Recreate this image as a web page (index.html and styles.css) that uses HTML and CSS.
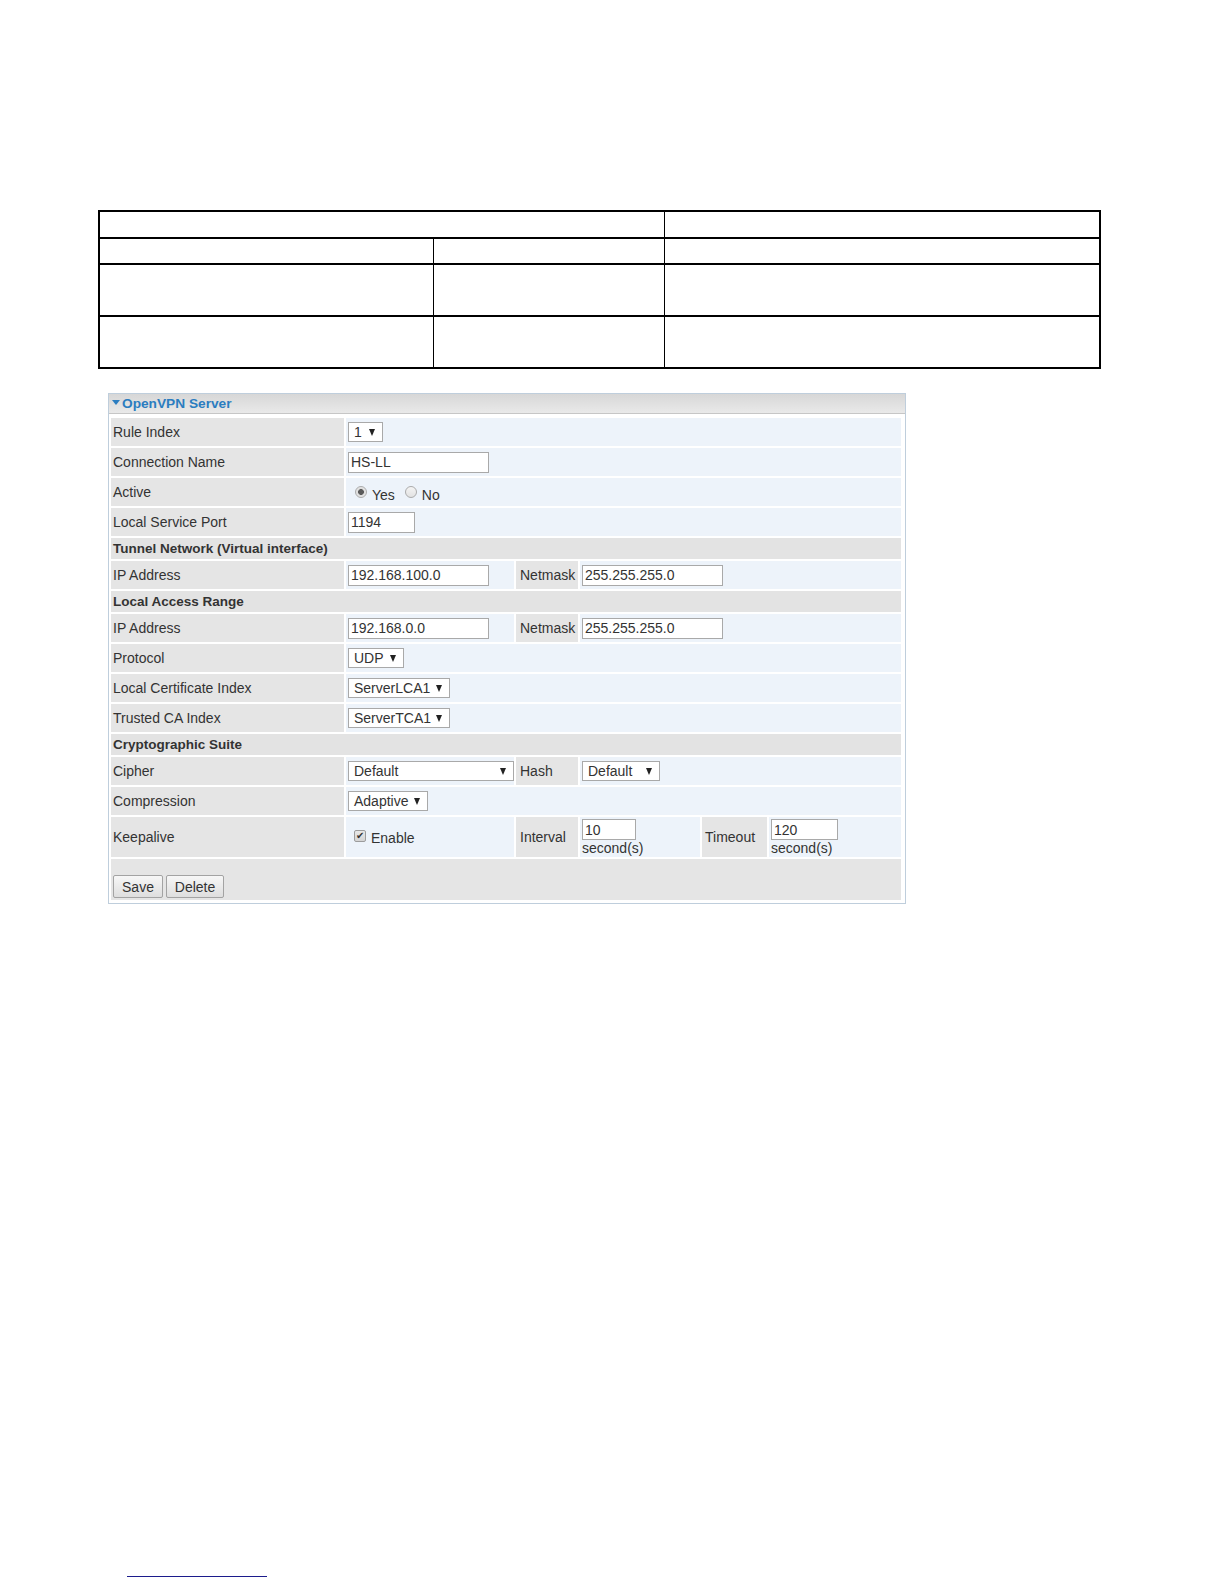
FILE: index.html
```html
<!DOCTYPE html>
<html>
<head>
<meta charset="utf-8">
<title>OpenVPN Server</title>
<link rel="stylesheet" href="styles.css">
</head>
<body>
<div class="page">
  <table class="doc">
    <colgroup><col class="c1"><col class="c2"><col class="c3"></colgroup>
    <tr class="r1"><td colspan="2"></td><td></td></tr>
    <tr class="r2"><td></td><td></td><td></td></tr>
    <tr class="r3"><td></td><td></td><td></td></tr>
    <tr class="r4"><td></td><td></td><td></td></tr>
  </table>

  <div class="panel">
    <div class="panel-head"><span class="caret"></span>OpenVPN Server</div>
    <div class="panel-body">
      <div class="row"><div class="lbl">Rule Index</div><div class="val"><span class="sel w35"><span>1</span><span class="arr"></span></span></div></div>
      <div class="row"><div class="lbl">Connection Name</div><div class="val"><input class="inp w141" type="text" value="HS-LL"></div></div>
      <div class="row"><div class="lbl">Active</div><div class="val">
        <span class="radio on"></span><span class="rtext">Yes</span>
        <span class="radio second"></span><span class="rtext">No</span>
      </div></div>
      <div class="row"><div class="lbl">Local Service Port</div><div class="val"><input class="inp w67" type="text" value="1194"></div></div>

      <div class="sec">Tunnel Network (Virtual interface)</div>
      <div class="row"><div class="lbl">IP Address</div><div class="val split">
        <div class="sub a"><input class="inp w141" type="text" value="192.168.100.0"></div>
        <div class="sub g">Netmask</div>
        <div class="sub fill"><input class="inp w141" type="text" value="255.255.255.0"></div>
      </div></div>

      <div class="sec">Local Access Range</div>
      <div class="row"><div class="lbl">IP Address</div><div class="val split">
        <div class="sub a"><input class="inp w141" type="text" value="192.168.0.0"></div>
        <div class="sub g">Netmask</div>
        <div class="sub fill"><input class="inp w141" type="text" value="255.255.255.0"></div>
      </div></div>
      <div class="row"><div class="lbl">Protocol</div><div class="val"><span class="sel w56"><span>UDP</span><span class="arr"></span></span></div></div>
      <div class="row"><div class="lbl">Local Certificate Index</div><div class="val"><span class="sel w102"><span>ServerLCA1</span><span class="arr"></span></span></div></div>
      <div class="row"><div class="lbl">Trusted CA Index</div><div class="val"><span class="sel w102"><span>ServerTCA1</span><span class="arr"></span></span></div></div>

      <div class="sec">Cryptographic Suite</div>
      <div class="row"><div class="lbl">Cipher</div><div class="val split">
        <div class="sub a"><span class="sel w166"><span>Default</span><span class="arr"></span></span></div>
        <div class="sub g">Hash</div>
        <div class="sub fill"><span class="sel w78"><span>Default</span><span class="arr"></span></span></div>
      </div></div>
      <div class="row"><div class="lbl">Compression</div><div class="val"><span class="sel w80"><span>Adaptive</span><span class="arr"></span></span></div></div>
      <div class="row tall"><div class="lbl">Keepalive</div><div class="val split">
        <div class="sub a"><span class="check">&#10004;</span><span class="ctext">Enable</span></div>
        <div class="sub g">Interval</div>
        <div class="sub stack w120"><input class="inp w54" type="text" value="10"><span class="unit">second(s)</span></div>
        <div class="sub g2">Timeout</div>
        <div class="sub stack fill"><input class="inp w67" type="text" value="120"><span class="unit">second(s)</span></div>
      </div></div>

      <div class="btnrow">
        <button class="btn save" type="button">Save</button>
        <button class="btn del" type="button">Delete</button>
      </div>
    </div>
  </div>

  <div class="foot"><a class="footlink" href="#"></a></div>
</div>
</body>
</html>
```

FILE: styles.css
```css
* { box-sizing: border-box; }

body {
  margin: 0;
  background: #fff;
  font-family: "Liberation Sans", Arial, sans-serif;
  color: #333;
}

.page {
  padding-top: 210px;
}

/* document table */
.doc {
  margin-left: 98px;
  width: 1001px;
  border-collapse: collapse;
  table-layout: fixed;
  border: 2px solid #000;
}
.doc .c1 { width: 334px; }
.doc .c2 { width: 231px; }
.doc .c3 { width: 436px; }
.doc td {
  border-left: 1px solid #000;
  border-right: 1px solid #000;
  border-top: 2px solid #000;
  border-bottom: 2px solid #000;
  padding: 0;
}
.doc .r1 td { height: 27px; }
.doc .r2 td { height: 26px; }
.doc .r3 td { height: 52px; }
.doc .r4 td { height: 52px; }

/* panel */
.panel {
  margin: 24px 0 0 108px;
  width: 798px;
  border: 1px solid #bfcedc;
  background: #fff;
}

.panel-head {
  height: 20px;
  border-bottom: 1px solid #c6c6c6;
  background: linear-gradient(#d7d7d7, #e9e9e9);
  color: #2b7dc0;
  font-weight: bold;
  font-size: 13.7px;
  display: flex;
  align-items: center;
  padding-left: 3px;
}
.caret {
  width: 0;
  height: 0;
  border-left: 4px solid transparent;
  border-right: 4px solid transparent;
  border-top: 5px solid #2b7dc0;
  margin-right: 2px;
  margin-top: -3px;
}

.panel-body {
  display: flex;
  flex-direction: column;
  gap: 2px;
  padding: 4px 4px 3px 2px;
}

.row {
  display: grid;
  grid-template-columns: 233px 1fr;
  gap: 2px;
  height: 28px;
}
.row.tall { height: 40px; }

.lbl {
  background: #e5e5e5;
  font-size: 14px;
  display: flex;
  align-items: center;
  padding-left: 2px;
}

.val {
  background: #edf3fa;
  display: flex;
  align-items: center;
  padding-left: 2px;
  font-size: 14px;
}
.val.split {
  background: none;
  padding: 0;
  gap: 2px;
  align-items: stretch;
}

.sub {
  background: #edf3fa;
  display: flex;
  align-items: center;
  padding-left: 2px;
  font-size: 14px;
}
.sub.a { width: 168px; }
.sub.g {
  background: #e5e5e5;
  width: 62px;
  padding-left: 4px;
}
.sub.g2 {
  background: #e5e5e5;
  width: 65px;
  padding-left: 3px;
}
.sub.fill { flex: 1; }
.sub.w120 { width: 120px; }
.sub.stack {
  flex-direction: column;
  align-items: flex-start;
  justify-content: flex-start;
  padding-top: 2px;
}
.unit {
  font-size: 14px;
  line-height: 16px;
}

.sec {
  height: 21px;
  background: #e3e3e3;
  font-weight: bold;
  font-size: 13.5px;
  display: flex;
  align-items: center;
  padding-left: 2px;
}

/* controls */
.inp {
  height: 21px;
  border: 1px solid #a9a9a9;
  background: #fff;
  font-family: "Liberation Sans", Arial, sans-serif;
  font-size: 14px;
  color: #333;
  padding: 0 2px;
  margin: 0;
  outline: none;
}
.w54 { width: 54px; }
.w67 { width: 67px; }
.w141 { width: 141px; }

.sel {
  display: inline-flex;
  align-items: center;
  justify-content: space-between;
  height: 20px;
  border: 1px solid #a9a9a9;
  background: #fff;
  padding: 0 7px 0 5px;
  font-size: 14px;
  color: #333;
}
.sel .arr {
  width: 0;
  height: 0;
  border-left: 3.5px solid transparent;
  border-right: 3.5px solid transparent;
  border-top: 7px solid #222;
  margin-top: 1px;
}
.w35 { width: 35px; }
.w56 { width: 56px; }
.w78 { width: 78px; }
.w80 { width: 80px; }
.w102 { width: 102px; }
.w166 { width: 166px; }

.radio {
  width: 12px;
  height: 12px;
  border-radius: 50%;
  border: 1px solid #ababab;
  background: linear-gradient(#f4f4f4, #e2e2e2);
  margin-left: 7px;
  flex: none;
}
.radio.on {
  background: radial-gradient(circle, #5a5a5a 0 2.6px, #dcdcdc 3.2px, #f2f2f2 100%);
}
.radio.second { margin-left: 10px; }
.rtext {
  margin-left: 5px;
  margin-top: 5px;
}

.check {
  width: 12px;
  height: 12px;
  border: 1px solid #9c9c9c;
  border-radius: 2px;
  background: linear-gradient(#e8e8e8, #d4d4d4);
  color: #333;
  font-size: 10px;
  line-height: 10px;
  text-align: center;
  margin-left: 6px;
  margin-top: -3px;
  flex: none;
}
.ctext {
  margin-left: 5px;
  margin-top: 2px;
}

.btnrow {
  height: 41px;
  background: #e5e5e5;
  display: flex;
  align-items: flex-end;
  gap: 3px;
  padding: 0 0 2px 2px;
}
.btn {
  height: 23px;
  border: 1px solid #a3a3a3;
  border-radius: 2px;
  background: linear-gradient(#f7f7f7, #dedede);
  font-family: "Liberation Sans", Arial, sans-serif;
  font-size: 14px;
  color: #333;
  padding: 0;
  margin: 0;
}
.btn.save { width: 50px; }
.btn.del { width: 58px; }

/* footer underline */
.foot {
  margin-top: 672px;
  padding-left: 127px;
}
.footlink {
  display: block;
  width: 140px;
  height: 1px;
  border-top: 1px solid #1c1c8c;
}
```
